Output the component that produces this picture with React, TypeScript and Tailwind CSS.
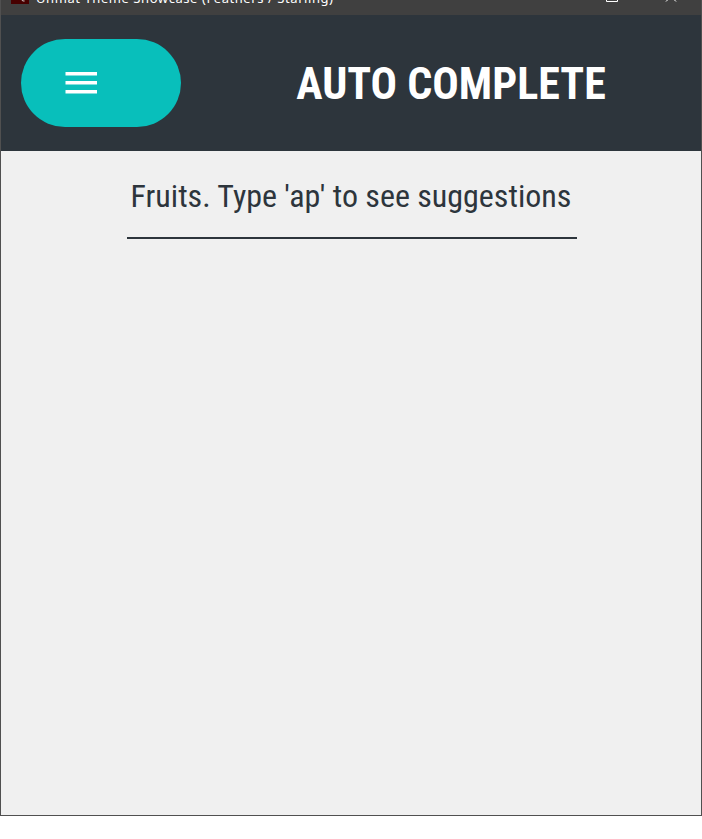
export default function App() {
  return (
    <div className="w-[702px] h-[839px] bg-white overflow-hidden">
      <div className="h-[816px] flex flex-col border-x border-b border-[#505050] bg-[#f0f0f0]">
        <div className="h-[15px] shrink-0 overflow-hidden bg-[#404040] flex items-start text-white">
          <svg className="ml-[10px] shrink-0" width="18" height="5"><path d="M0 0h18v4H0z" fill="#470000" /><path d="M11 0c0 .7 1 1 2.500 1" fill="none" stroke="#eee" /></svg>
          <span className="ml-[7px] -mt-[12px] h-[20px] leading-[20px] text-[13px] tracking-[0.57px] font-['Noto_Sans',sans-serif] whitespace-nowrap w-[298px]">Unmat Theme Showcase (Feathers / Starling)</span>
          <svg className="ml-[272px] shrink-0" width="80" height="5"><path d="M.5 0v1.500h11V0M60 1.500l5-5 5 5" fill="none" stroke="#fff" /></svg>
        </div>
        <header className="h-[136px] shrink-0 bg-[#2d353c] flex items-center pl-5">
          <button className="w-[160px] h-[88px] rounded-[44px] bg-[#08bfbb] pl-11 flex items-center">
            <svg className="-mt-px" width="32" height="22"><path d="M.5 1.750h31.500M.5 10.750h31.500M.5 19.750h31.500" stroke="#fff" strokeWidth="3.500" /></svg>
          </button>
          <h1 className="ml-[114px] w-[312px] pt-[3px] text-center text-white text-[44px] leading-[51px] font-bold whitespace-nowrap font-['Roboto_Condensed',Roboto,sans-serif]">AUTO COMPLETE</h1>
        </header>
        <main className="flex-1 flex flex-col items-center">
          <div className="ml-[2px] w-[450px] h-[88px] pt-[3px] pr-[2px] border-b-2 border-[#2d353c] flex items-center justify-center text-[32px] font-normal text-[#2d353c] whitespace-nowrap font-['Roboto_Condensed',Roboto,sans-serif]">Fruits. Type 'ap' to see suggestions</div>
        </main>
      </div>
    </div>
  );
}
